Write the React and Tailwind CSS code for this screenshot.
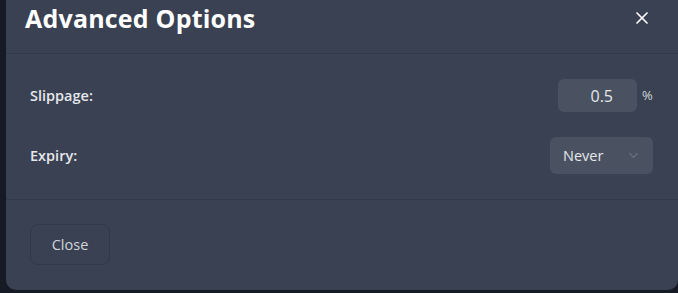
import { X, ChevronDown } from 'lucide-react';

const AdvancedOptionsModal = () => {
  return (
    <div className="flex flex-col rounded-b-[10px] bg-[#394152] text-white">
      {/* Header */}
      <div className="flex h-[54px] items-start justify-between border-b border-[#323947] pl-[19px] pr-[26px] pt-[1px]">
        <h2 className="text-[25px] font-bold leading-[34px] tracking-[0.2px]">Advanced Options</h2>
        <button className="mt-[7px] text-white">
          <X className="h-[20px] w-[20px]" strokeWidth={2} />
        </button>
      </div>

      {/* Options */}
      <div className="flex flex-col gap-[25px] border-b border-[#323947] pb-[25px] pl-[24px] pr-[25px] pt-[25px]">
        <div className="flex items-center justify-between">
          <span className="text-[14.5px] font-semibold text-[#e5e7eb]">Slippage:</span>
          <div className="flex items-center gap-[5px]">
            <input
              defaultValue="0.5"
              className="h-[33px] w-[79px] rounded-[6px] bg-[#4a5262] pr-[24px] text-right text-[16px] text-[#e5e7eb] outline-none"
            />
            <span className="w-[11px] text-[13px] text-[#d1d5db]">%</span>
          </div>
        </div>
        <div className="flex items-center justify-between">
          <span className="text-[14.5px] font-semibold text-[#e5e7eb]">Expiry:</span>
          <button className="flex h-[37px] w-[103px] items-center justify-between rounded-[6px] bg-[#4a5262] pl-[13px] pr-[12px] text-[14.5px] text-[#e5e7eb]">
            <span>Never</span>
            <ChevronDown className="h-[15px] w-[15px] text-[#6b7383]" strokeWidth={2} />
          </button>
        </div>
      </div>

      {/* Footer */}
      <div className="px-[24px] pb-[25px] pt-[24px]">
        <button className="h-[41px] w-[80px] rounded-[8px] border border-[#323947] text-[14.5px] text-[#d1d5db]">
          Close
        </button>
      </div>
    </div>
  );
};

export default function App() {
  return (
    <div
      className="h-[293px] w-[678px] overflow-hidden bg-[#151a25] pl-[6px]"
      style={{ fontFamily: '"Open Sans", "Liberation Sans", sans-serif' }}
    >
      <AdvancedOptionsModal />
    </div>
  );
}
